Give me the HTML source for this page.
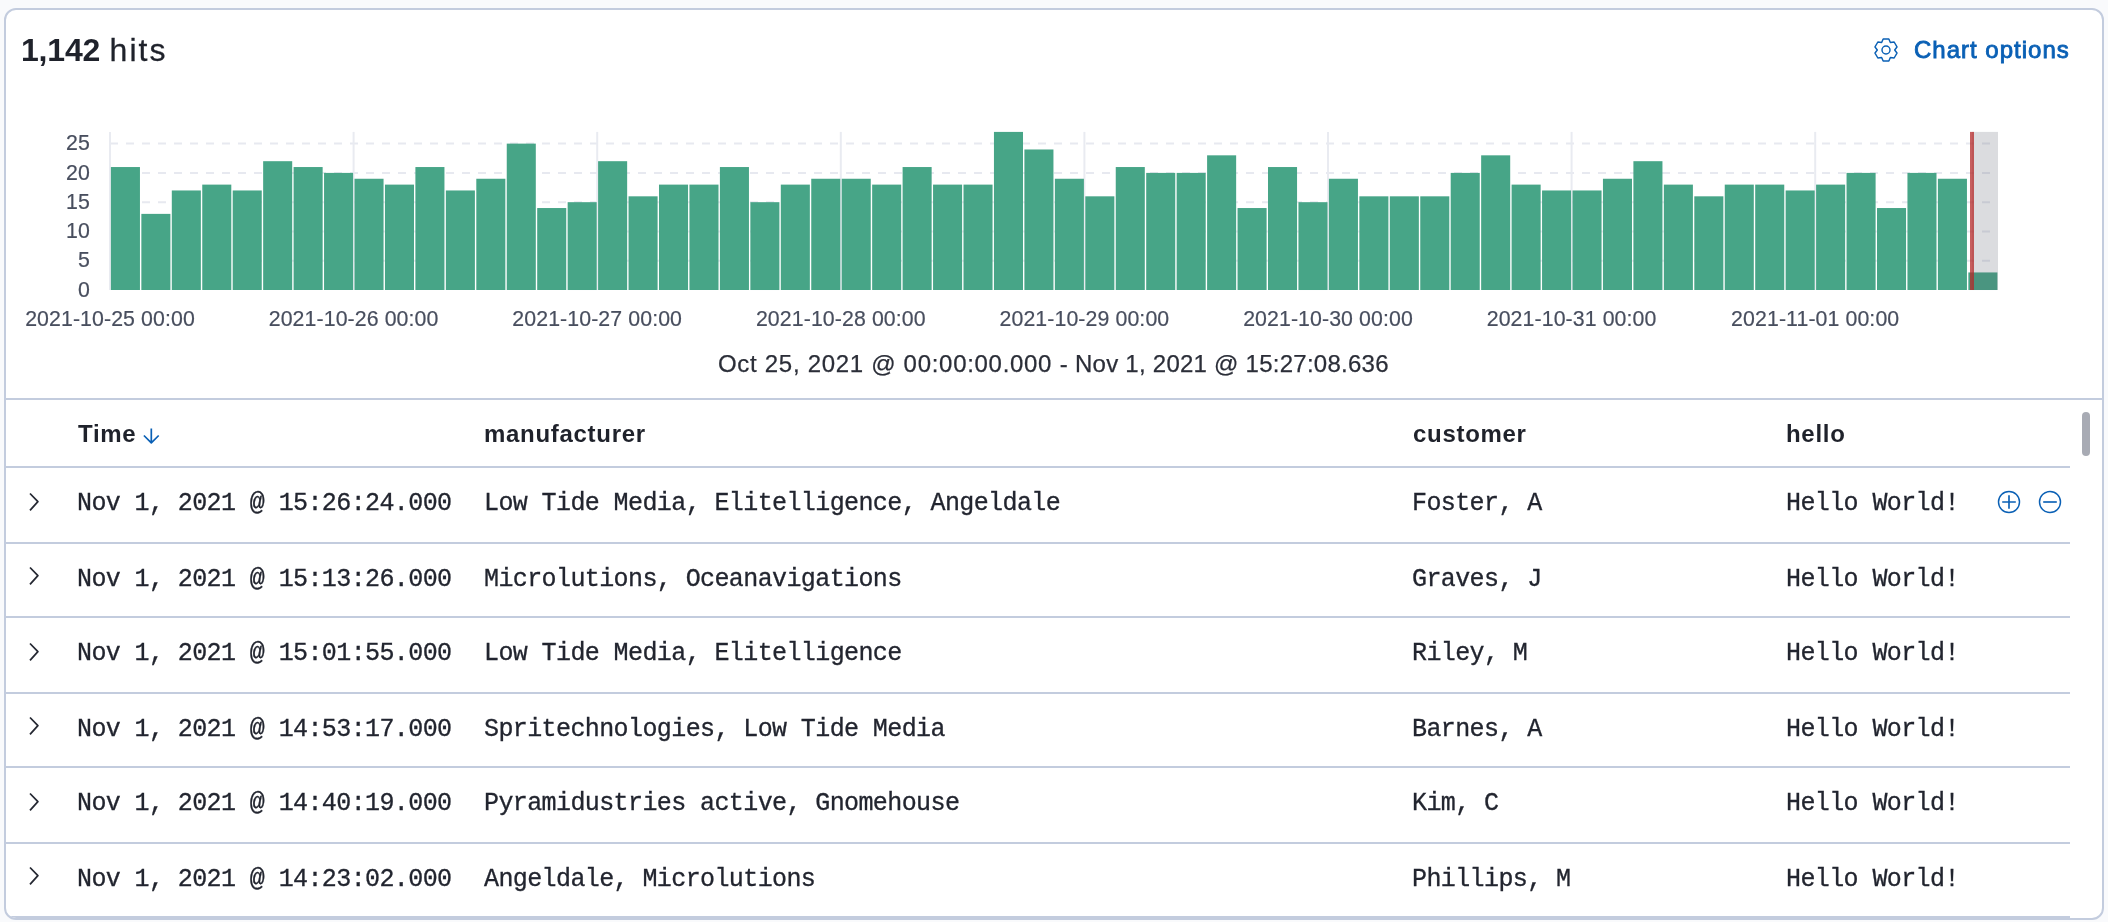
<!DOCTYPE html>
<html lang="en"><head><meta charset="utf-8"><title>Discover</title>
<style>
html,body{margin:0;padding:0}
body{width:2108px;height:922px;overflow:hidden;background:#f9fafc;font-family:"Liberation Sans",sans-serif;color:#22252f;position:relative}
.panel{position:absolute;left:4px;top:8px;width:2100px;height:912px;box-sizing:border-box;border:2px solid #c3ccde;border-radius:12px;background:#fff;overflow:hidden}
.panel>*{position:absolute}
.hits,.opts,.range,.th,.row,.chart{will-change:transform}
.hits{left:15px;top:22px;font-size:32px;line-height:36px;white-space:nowrap;color:#1f222b}
.hits b{font-weight:700;letter-spacing:-0.2px}
.hits span{margin-left:-1.6px;letter-spacing:2.1px;-webkit-text-stroke:0.3px #1f222b}
.opts{left:1908px;top:26px;font-size:24px;line-height:28px;font-weight:400;-webkit-text-stroke:0.85px #0a60b5;color:#0a60b5;white-space:nowrap;letter-spacing:1.0px}
.gear{left:1866px;top:26px}
.ax{font-family:"Liberation Sans",sans-serif;font-size:21.3px;fill:#484e5e;stroke:#484e5e;stroke-width:0.2px;letter-spacing:0.1px}
.range{left:0;width:2096px;top:340px;height:28px;font-size:24px;line-height:28px;color:#2b2e38;-webkit-text-stroke:0.25px #2b2e38;white-space:pre}
.range span{position:absolute;top:0}
.hsep{left:0;top:388px;width:2096px;height:2px;background:#c3ccde}
.sep{left:0;width:2064px;height:2px;background:#c3ccde}
.th{top:410px;letter-spacing:0.7px;font-size:24px;line-height:28px;font-weight:700;color:#1f222b;white-space:nowrap}
.row{left:0;width:2064px}
.row>*{position:absolute}
.c{top:22.3px;font-family:"Liberation Mono",monospace;font-size:25px;letter-spacing:-0.6px;line-height:28px;white-space:pre;color:#22252f;-webkit-text-stroke:0.3px #22252f}
.c1{left:71px}.c2{left:478px}.c3{left:1406px}.c4{left:1780px}
.chev{left:20px;top:22px}
.thumb{left:2076px;top:402px;width:8px;height:44px;border-radius:4px;background:#a8abb4}
</style></head><body>
<div class="panel">
<div class="hits"><b>1,142</b><span> hits</span></div>
<svg class="gear" width="28" height="28" viewBox="0 0 28 28"><g fill="none" stroke="#0a60b5" stroke-width="1.45" stroke-linejoin="round"><circle cx="14" cy="14" r="4"/><path d="M16.85 2.96 L11.15 2.96 L9.65 6.47 L5.87 6.01 L3.01 10.95 L5.30 14.00 L3.01 17.05 L5.87 21.99 L9.65 21.53 L11.15 25.04 L16.85 25.04 L18.35 21.53 L22.13 21.99 L24.99 17.05 L22.70 14.00 L24.99 10.95 L22.13 6.01 L18.35 6.47Z"/></g></svg>
<div class="opts">Chart options</div>
<svg class="chart" width="2100" height="400" viewBox="0 0 2100 400" style="position:absolute;left:-6px;top:-10px"><line x1="110.0" x2="1997.9" y1="260.73" y2="260.73" stroke="#e7e9f0" stroke-width="2" stroke-dasharray="8 8"/><line x1="110.0" x2="1997.9" y1="231.45" y2="231.45" stroke="#e7e9f0" stroke-width="2" stroke-dasharray="8 8"/><line x1="110.0" x2="1997.9" y1="202.18" y2="202.18" stroke="#e7e9f0" stroke-width="2" stroke-dasharray="8 8"/><line x1="110.0" x2="1997.9" y1="172.90" y2="172.90" stroke="#e7e9f0" stroke-width="2" stroke-dasharray="8 8"/><line x1="110.0" x2="1997.9" y1="143.62" y2="143.62" stroke="#e7e9f0" stroke-width="2" stroke-dasharray="8 8"/><line x1="110.00" x2="110.00" y1="131.9" y2="290.0" stroke="#e9ebf1" stroke-width="2"/><line x1="353.60" x2="353.60" y1="131.9" y2="290.0" stroke="#e9ebf1" stroke-width="2"/><line x1="597.20" x2="597.20" y1="131.9" y2="290.0" stroke="#e9ebf1" stroke-width="2"/><line x1="840.80" x2="840.80" y1="131.9" y2="290.0" stroke="#e9ebf1" stroke-width="2"/><line x1="1084.40" x2="1084.40" y1="131.9" y2="290.0" stroke="#e9ebf1" stroke-width="2"/><line x1="1328.00" x2="1328.00" y1="131.9" y2="290.0" stroke="#e9ebf1" stroke-width="2"/><line x1="1571.60" x2="1571.60" y1="131.9" y2="290.0" stroke="#e9ebf1" stroke-width="2"/><line x1="1815.20" x2="1815.20" y1="131.9" y2="290.0" stroke="#e9ebf1" stroke-width="2"/><rect x="110.90" y="167.04" width="29.05" height="122.96" fill="#47a587"/><rect x="141.35" y="213.88" width="29.05" height="76.12" fill="#47a587"/><rect x="171.80" y="190.46" width="29.05" height="99.54" fill="#47a587"/><rect x="202.25" y="184.61" width="29.05" height="105.39" fill="#47a587"/><rect x="232.70" y="190.46" width="29.05" height="99.54" fill="#47a587"/><rect x="263.15" y="161.19" width="29.05" height="128.81" fill="#47a587"/><rect x="293.60" y="167.04" width="29.05" height="122.96" fill="#47a587"/><rect x="324.05" y="172.90" width="29.05" height="117.10" fill="#47a587"/><rect x="354.50" y="178.75" width="29.05" height="111.25" fill="#47a587"/><rect x="384.95" y="184.61" width="29.05" height="105.39" fill="#47a587"/><rect x="415.40" y="167.04" width="29.05" height="122.96" fill="#47a587"/><rect x="445.85" y="190.46" width="29.05" height="99.54" fill="#47a587"/><rect x="476.30" y="178.75" width="29.05" height="111.25" fill="#47a587"/><rect x="506.75" y="143.62" width="29.05" height="146.38" fill="#47a587"/><rect x="537.20" y="208.03" width="29.05" height="81.97" fill="#47a587"/><rect x="567.65" y="202.18" width="29.05" height="87.83" fill="#47a587"/><rect x="598.10" y="161.19" width="29.05" height="128.81" fill="#47a587"/><rect x="628.55" y="196.32" width="29.05" height="93.68" fill="#47a587"/><rect x="659.00" y="184.61" width="29.05" height="105.39" fill="#47a587"/><rect x="689.45" y="184.61" width="29.05" height="105.39" fill="#47a587"/><rect x="719.90" y="167.04" width="29.05" height="122.96" fill="#47a587"/><rect x="750.35" y="202.18" width="29.05" height="87.83" fill="#47a587"/><rect x="780.80" y="184.61" width="29.05" height="105.39" fill="#47a587"/><rect x="811.25" y="178.75" width="29.05" height="111.25" fill="#47a587"/><rect x="841.70" y="178.75" width="29.05" height="111.25" fill="#47a587"/><rect x="872.15" y="184.61" width="29.05" height="105.39" fill="#47a587"/><rect x="902.60" y="167.04" width="29.05" height="122.96" fill="#47a587"/><rect x="933.05" y="184.61" width="29.05" height="105.39" fill="#47a587"/><rect x="963.50" y="184.61" width="29.05" height="105.39" fill="#47a587"/><rect x="993.95" y="131.91" width="29.05" height="158.09" fill="#47a587"/><rect x="1024.40" y="149.48" width="29.05" height="140.52" fill="#47a587"/><rect x="1054.85" y="178.75" width="29.05" height="111.25" fill="#47a587"/><rect x="1085.30" y="196.32" width="29.05" height="93.68" fill="#47a587"/><rect x="1115.75" y="167.04" width="29.05" height="122.96" fill="#47a587"/><rect x="1146.20" y="172.90" width="29.05" height="117.10" fill="#47a587"/><rect x="1176.65" y="172.90" width="29.05" height="117.10" fill="#47a587"/><rect x="1207.10" y="155.33" width="29.05" height="134.67" fill="#47a587"/><rect x="1237.55" y="208.03" width="29.05" height="81.97" fill="#47a587"/><rect x="1268.00" y="167.04" width="29.05" height="122.96" fill="#47a587"/><rect x="1298.45" y="202.18" width="29.05" height="87.83" fill="#47a587"/><rect x="1328.90" y="178.75" width="29.05" height="111.25" fill="#47a587"/><rect x="1359.35" y="196.32" width="29.05" height="93.68" fill="#47a587"/><rect x="1389.80" y="196.32" width="29.05" height="93.68" fill="#47a587"/><rect x="1420.25" y="196.32" width="29.05" height="93.68" fill="#47a587"/><rect x="1450.70" y="172.90" width="29.05" height="117.10" fill="#47a587"/><rect x="1481.15" y="155.33" width="29.05" height="134.67" fill="#47a587"/><rect x="1511.60" y="184.61" width="29.05" height="105.39" fill="#47a587"/><rect x="1542.05" y="190.46" width="29.05" height="99.54" fill="#47a587"/><rect x="1572.50" y="190.46" width="29.05" height="99.54" fill="#47a587"/><rect x="1602.95" y="178.75" width="29.05" height="111.25" fill="#47a587"/><rect x="1633.40" y="161.19" width="29.05" height="128.81" fill="#47a587"/><rect x="1663.85" y="184.61" width="29.05" height="105.39" fill="#47a587"/><rect x="1694.30" y="196.32" width="29.05" height="93.68" fill="#47a587"/><rect x="1724.75" y="184.61" width="29.05" height="105.39" fill="#47a587"/><rect x="1755.20" y="184.61" width="29.05" height="105.39" fill="#47a587"/><rect x="1785.65" y="190.46" width="29.05" height="99.54" fill="#47a587"/><rect x="1816.10" y="184.61" width="29.05" height="105.39" fill="#47a587"/><rect x="1846.55" y="172.90" width="29.05" height="117.10" fill="#47a587"/><rect x="1877.00" y="208.03" width="29.05" height="81.97" fill="#47a587"/><rect x="1907.45" y="172.90" width="29.05" height="117.10" fill="#47a587"/><rect x="1937.90" y="178.75" width="29.05" height="111.25" fill="#47a587"/><rect x="1968.35" y="272.44" width="29.05" height="17.57" fill="#47a587"/><rect x="1972" y="131.9" width="26" height="158.10" fill="#555a69" fill-opacity="0.21"/><rect x="1970" y="131.9" width="4" height="158.10" fill="#b42828" fill-opacity="0.75"/><text class="ax" x="90" y="296.6" text-anchor="end">0</text><text class="ax" x="90" y="267.3" text-anchor="end">5</text><text class="ax" x="90" y="238.0" text-anchor="end">10</text><text class="ax" x="90" y="208.8" text-anchor="end">15</text><text class="ax" x="90" y="179.5" text-anchor="end">20</text><text class="ax" x="90" y="150.2" text-anchor="end">25</text><text class="ax" x="110.0" y="325.9" text-anchor="middle">2021-10-25 00:00</text><text class="ax" x="353.6" y="325.9" text-anchor="middle">2021-10-26 00:00</text><text class="ax" x="597.2" y="325.9" text-anchor="middle">2021-10-27 00:00</text><text class="ax" x="840.8" y="325.9" text-anchor="middle">2021-10-28 00:00</text><text class="ax" x="1084.4" y="325.9" text-anchor="middle">2021-10-29 00:00</text><text class="ax" x="1328.0" y="325.9" text-anchor="middle">2021-10-30 00:00</text><text class="ax" x="1571.6" y="325.9" text-anchor="middle">2021-10-31 00:00</text><text class="ax" x="1815.2" y="325.9" text-anchor="middle">2021-11-01 00:00</text></svg>
<div class="range"><span style="left:712px;letter-spacing:0.7px">Oct 25, 2021 @ 00:00:00.000</span><span style="left:1047px"> - </span><span style="left:1069px;letter-spacing:0.25px">Nov 1, 2021 @ 15:27:08.636</span></div>
<div class="hsep"></div>
<div class="th" style="left:72px">Time</div>
<svg style="left:-6px;top:-10px" width="200" height="460" viewBox="0 0 200 460"><path d="M151.3 428.5V442.6M143.9 435.5L151.3 442.8L158.7 435.5" fill="none" stroke="#0a60b5" stroke-width="1.7" stroke-linejoin="round"/></svg>
<div class="th" style="left:478px">manufacturer</div>
<div class="th" style="left:1406.5px">customer</div>
<div class="th" style="left:1780px">hello</div>
<div class="sep" style="top:456px"></div><div class="sep" style="top:532px"></div><div class="sep" style="top:606px"></div><div class="sep" style="top:682px"></div><div class="sep" style="top:756px"></div><div class="sep" style="top:832px"></div><div class="sep" style="top:906px"></div>
<div class="row" style="top:458px;height:74px">
<svg class="chev" style="top:22.2px" width="16" height="24" viewBox="0 0 16 24"><path d="M4.0 3.5 L11.9 11.7 L4.0 20.3" fill="none" stroke="#252832" stroke-width="1.75" stroke-linejoin="round"/></svg>
<span class="c c1">Nov 1, 2021 @ 15:26:24.000</span><span class="c c2">Low Tide Media, Elitelligence, Angeldale</span><span class="c c3">Foster, A</span><span class="c c4">Hello World!</span><svg class="ic" style="left:1991.4px;top:21.7px" width="24" height="24" viewBox="0 0 24 24"><circle cx="12" cy="12" r="10.5" fill="none" stroke="#0a60b5" stroke-width="1.45"/><path d="M12 5.2v13.6M5.2 12h13.6" stroke="#0a60b5" stroke-width="1.65" fill="none"/></svg><svg class="ic" style="left:2031.5px;top:21.7px" width="24" height="24" viewBox="0 0 24 24"><circle cx="12" cy="12" r="10.5" fill="none" stroke="#0a60b5" stroke-width="1.45"/><path d="M5.2 12h13.6" stroke="#0a60b5" stroke-width="1.65" fill="none"/></svg>
</div><div class="row" style="top:534px;height:72px">
<svg class="chev" style="top:20.2px" width="16" height="24" viewBox="0 0 16 24"><path d="M4.0 3.5 L11.9 11.7 L4.0 20.3" fill="none" stroke="#252832" stroke-width="1.75" stroke-linejoin="round"/></svg>
<span class="c c1">Nov 1, 2021 @ 15:13:26.000</span><span class="c c2">Microlutions, Oceanavigations</span><span class="c c3">Graves, J</span><span class="c c4">Hello World!</span>
</div><div class="row" style="top:608px;height:74px">
<svg class="chev" style="top:22.2px" width="16" height="24" viewBox="0 0 16 24"><path d="M4.0 3.5 L11.9 11.7 L4.0 20.3" fill="none" stroke="#252832" stroke-width="1.75" stroke-linejoin="round"/></svg>
<span class="c c1">Nov 1, 2021 @ 15:01:55.000</span><span class="c c2">Low Tide Media, Elitelligence</span><span class="c c3">Riley, M</span><span class="c c4">Hello World!</span>
</div><div class="row" style="top:684px;height:72px">
<svg class="chev" style="top:20.2px" width="16" height="24" viewBox="0 0 16 24"><path d="M4.0 3.5 L11.9 11.7 L4.0 20.3" fill="none" stroke="#252832" stroke-width="1.75" stroke-linejoin="round"/></svg>
<span class="c c1">Nov 1, 2021 @ 14:53:17.000</span><span class="c c2">Spritechnologies, Low Tide Media</span><span class="c c3">Barnes, A</span><span class="c c4">Hello World!</span>
</div><div class="row" style="top:758px;height:74px">
<svg class="chev" style="top:22.2px" width="16" height="24" viewBox="0 0 16 24"><path d="M4.0 3.5 L11.9 11.7 L4.0 20.3" fill="none" stroke="#252832" stroke-width="1.75" stroke-linejoin="round"/></svg>
<span class="c c1">Nov 1, 2021 @ 14:40:19.000</span><span class="c c2">Pyramidustries active, Gnomehouse</span><span class="c c3">Kim, C</span><span class="c c4">Hello World!</span>
</div><div class="row" style="top:834px;height:72px">
<svg class="chev" style="top:20.2px" width="16" height="24" viewBox="0 0 16 24"><path d="M4.0 3.5 L11.9 11.7 L4.0 20.3" fill="none" stroke="#252832" stroke-width="1.75" stroke-linejoin="round"/></svg>
<span class="c c1">Nov 1, 2021 @ 14:23:02.000</span><span class="c c2">Angeldale, Microlutions</span><span class="c c3">Phillips, M</span><span class="c c4">Hello World!</span>
</div>
<div class="thumb"></div>
</div>
</body></html>
